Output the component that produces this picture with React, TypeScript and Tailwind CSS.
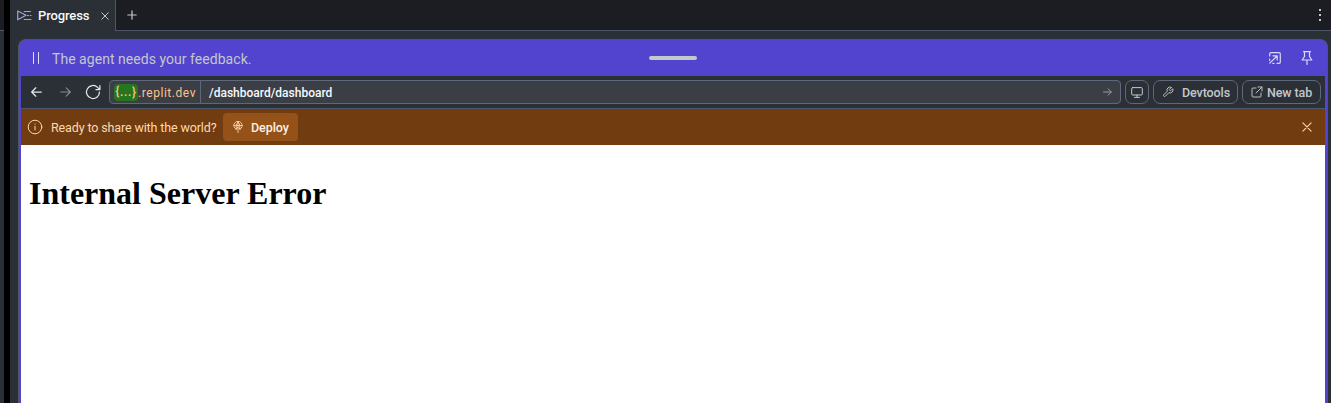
import type { ReactNode } from "react";

function Icon({ children, className = "", box = "0 0 24 24", weight = 1.8 }: { children: ReactNode; className?: string; box?: string; weight?: number }) {
  return (
    <svg viewBox={box} fill="none" stroke="currentColor" strokeWidth={weight} strokeLinecap="round" strokeLinejoin="round" className={`shrink-0 ${className}`}>
      {children}
    </svg>
  );
}

function TabBar() {
  return (
    <header className="flex h-[31px] shrink-0">
      <div className="flex w-[106px] items-center border-r border-[#4e5569] bg-[#2b2f36] pl-[7px]">
        <Icon className="h-[11px] w-[15px] text-[#a5a0d6]" box="0 0 15 11" weight={1.2}>
          <path d="M.7 1 9 5.3.7 9.8ZM7.2 1.5H13.5M10.5 5.5H11.5M13.3 5.5H14M7.2 9.5H14" />
        </Icon>
        <span className="ml-[6px] w-[52px] whitespace-nowrap text-[13px] leading-[18px] font-medium tracking-[-0.12px] text-[#f5f9fc]">Progress</span>
        <Icon className="ml-[11px] size-[8px] text-[#c2c8cc]" box="0 0 8 8" weight={1}>
          <path d="M.8.8 7.2 7.2M7.2.8.8 7.2" />
        </Icon>
      </div>
      <div className="flex flex-1 items-center justify-between border-b border-[#4e5569] bg-[#1c1d22] pr-[9px] pl-[11px]">
        <Icon className="size-[10px] text-[#c2c8cc]" box="0 0 10 10" weight={1.2}>
          <path d="M5 .8V9.2M.8 5H9.2" />
        </Icon>
        <svg viewBox="0 0 4 14" className="h-[14px] w-1 fill-[#c2c8cc]">
          <rect x="1" y="1" width="2" height="2" />
          <rect x="1" y="6" width="2" height="2" />
          <rect x="1" y="11" width="2" height="2" />
        </svg>
      </div>
    </header>
  );
}

function AgentBar() {
  return (
    <div className="grid h-[36px] shrink-0 grid-cols-[1fr_48px_1fr] items-center bg-[#5244ce]">
      <div className="flex items-center pl-[11px]">
        <Icon className="h-3 w-[8px] text-[#e0e0f8]" box="0 0 8 12" weight={1}>
          <path d="M1.5.5V11.5M6.5.5V11.5" />
        </Icon>
        <span className="ml-3 whitespace-nowrap pt-[2px] text-[14px] leading-5 tracking-[0.04px] text-[#c2c8cc]">The agent needs your feedback.</span>
      </div>
      <div className="h-1 rounded-full bg-[#c2c8cc]" />
      <div className="flex items-center justify-end gap-[20px] pr-[12px] text-[#dcd9f8]">
        <Icon className="size-[12px]" box="0 0 12 12" weight={1.2}>
          <path d="M.7 4V2Q.7.7 2 .7H10Q11.3.7 11.3 2V10Q11.3 11.3 10 11.3H8M.8 11.2 8 4M4 3.8H8.2V8M.7 7V8.5M3.8 11.3H5" />
        </Icon>
        <Icon className="h-[14px] w-[12px]" box="0 0 12 14" weight={1.2}>
          <path d="M2.5.7H9.5M3.5.7V5.5L1.2 9H10.8L8.5 5.5V.7M6 9V13.5" />
        </Icon>
      </div>
    </div>
  );
}

function AddressBar() {
  return (
    <div className="flex h-[33px] shrink-0 items-center border-b border-[#4e5569] bg-[#2b2f36] pr-[4px] pl-[10px]">
      <Icon className="h-[10px] w-[11px] text-[#e4e7ea]" box="0 0 11 10" weight={1.25}>
        <path d="M10.3 5H.7M4.8.8.7 5 4.8 9.2" />
      </Icon>
      <Icon className="ml-[18px] h-[10px] w-[11px] text-[#858b91]" box="0 0 11 10" weight={1.15}>
        <path d="M.7 5H10.3M6.2.8 10.3 5 6.2 9.2" />
      </Icon>
      <Icon className="ml-[14px] size-[16px] text-[#e4e7ea]" box="0 0 16 16" weight={1.25}>
        <path d="M14.5 8A6.5 6.5 0 1 1 12.6 3.4L14.9 5.6M14.9 1.6V5.6H10.9" />
      </Icon>
      <div className="ml-[8px] flex h-[24px] w-[1012px] items-center rounded-[4px] border border-[#5f677a] bg-[#3b3e45]">
        <div className="flex h-full w-[91px] items-center border-r border-[#5f677a] pl-[4px] text-[12px] leading-[17px] font-medium text-[#ffc28a]">
          <span className="flex h-[17px] w-[24px] items-center justify-center rounded-[4px] bg-[#26751f] tracking-[0.7px]">{"{...}"}</span>
          <span className="whitespace-nowrap pt-[2px] font-normal tracking-[0.55px]">.replit.dev</span>
        </div>
        <span className="ml-[8px] flex-1 pt-[2px] text-[12px] leading-[17px] font-medium text-[#f5f9fc]">/dashboard/dashboard</span>
        <Icon className="mr-[8px] h-2 w-[9px] text-[#969ba1]" box="0 0 9 8" weight={1}>
          <path d="M.5 4H8.3M5 .8 8.3 4 5 7.2" />
        </Icon>
      </div>
      <button className="ml-1 flex h-6 w-6 items-center justify-center rounded-[7px] border border-[#5f677a] text-[#c2c8cc]">
        <Icon className="h-[11px] w-[12px]" box="0 0 12 11" weight={1}>
          <rect x=".7" y=".6" width="10.6" height="7.4" rx="1" />
          <path d="M6 8V10.4M3.5 10.4H8.5" />
        </Icon>
      </button>
      <button className="ml-1 flex h-6 w-[85px] items-center rounded-[7px] border border-[#5f677a] pl-[8px] text-[#c2c8cc]">
        <Icon className="size-[12px]" weight={1.9}>
          <path d="M14.7 6.3a1 1 0 0 0 0 1.4l1.6 1.6a1 1 0 0 0 1.4 0l3.77-3.77a6 6 0 0 1-7.94 7.94l-6.91 6.91a2.12 2.12 0 0 1-3-3l6.91-6.91a6 6 0 0 1 7.94-7.94z" />
        </Icon>
        <span className="ml-[8px] whitespace-nowrap pt-[2px] text-[12.5px] leading-[18px] font-medium tracking-[-0.1px]">Devtools</span>
      </button>
      <button className="ml-1 flex h-6 w-[79px] items-center rounded-[7px] border border-[#5f677a] pl-[8px] text-[#c2c8cc]">
        <Icon className="size-[12px]" weight={1.9}>
          <path d="M14 2h8v8M22 2 10 14M10 4H4a2 2 0 0 0-2 2v14a2 2 0 0 0 2 2h14a2 2 0 0 0 2-2v-6" />
        </Icon>
        <span className="ml-[4px] whitespace-nowrap pt-[2px] text-[12.5px] leading-[18px] font-medium tracking-[-0.1px]">New tab</span>
      </button>
    </div>
  );
}

function DeployBanner() {
  return (
    <div className="flex h-[36px] shrink-0 items-center bg-[#703c10] pr-[13px] pl-[6px] text-[#ffd9b3]">
      <Icon className="size-[16px]" box="0 0 16 16" weight={1}>
        <circle cx="8" cy="8" r="6.8" />
        <path d="M8 7.3V11M8 5V5.1" />
      </Icon>
      <span className="ml-[8px] w-[166px] whitespace-nowrap pt-[2px] text-[12.5px] leading-[18px] tracking-[-0.13px]">Ready to share with the world?</span>
      <button className="ml-[6px] flex h-[28px] w-[75px] items-center rounded-[4px] bg-[#945118] pl-[10px]">
        <Icon className="h-[12px] w-[10px]" box="0 0 10 12" weight={0.85}>
          <path d="M3.2 8.3A4.2 4.2 0 1 1 6.8 8.3M.8 4.5H9.2M5 .5V11.5M3.2 8Q2.2 4 5 .5Q7.8 4 6.8 8M3 8.3 5 6.3 7 8.3" />
        </Icon>
        <span className="ml-[8px] pt-[2px] text-[12.5px] leading-[18px] font-medium tracking-[-0.05px] text-[#fff0e0]">Deploy</span>
      </button>
      <Icon className="ml-auto size-[10px]" box="0 0 10 10" weight={1.1}>
        <path d="M.9.9 9.1 9.1M9.1.9.9 9.1" />
      </Icon>
    </div>
  );
}

export default function App() {
  return (
    <div className="flex h-[403px] w-full overflow-hidden bg-black font-[Roboto,sans-serif]">
      <aside className="mr-[6px] w-[4px] shrink-0 bg-[#2b2f36]">
        <div className="h-[31px] border-b border-[#4e5569] bg-[#1c1d22]" />
      </aside>
      <main className="flex min-w-0 flex-1 flex-col bg-[#2b2f36]">
        <TabBar />
        <div className="flex min-h-0 flex-1 pt-[8px] pr-[3px] pl-[8px]">
          <section className="flex min-w-0 flex-1 flex-col overflow-hidden rounded-t-[8px] border-t border-r border-l border-[#4e5569] bg-[#5244ce] pr-[2px] pl-[2px]">
            <AgentBar />
            <AddressBar />
            <DeployBanner />
            <div className="flex-1 bg-white pt-[30px] pl-[8px]">
              <h1 className="font-['Liberation_Serif',serif] text-[32px] leading-[37px] font-bold text-black">Internal Server Error</h1>
            </div>
          </section>
        </div>
      </main>
    </div>
  );
}
